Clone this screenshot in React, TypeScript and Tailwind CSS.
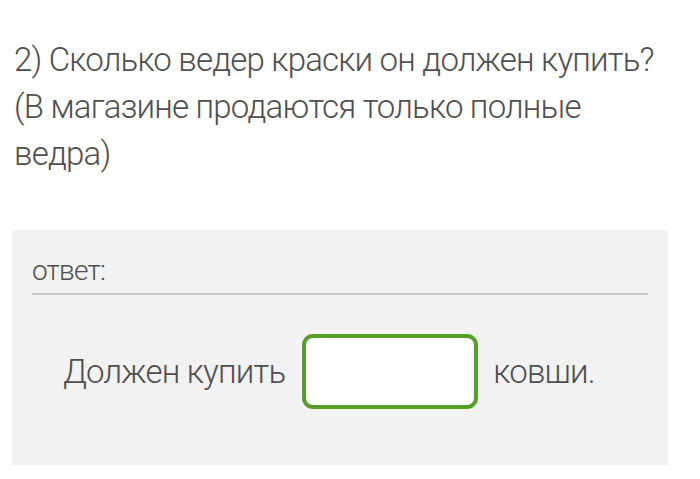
import React from "react";

export default function App() {
  return (
    <div className="w-[700px] h-[479px] bg-white text-[#4f4f4f] font-['Roboto',sans-serif] font-light tracking-[-0.8px] overflow-hidden">
      <div className="pt-[36px] pl-[14px] text-[33px] leading-[47px]">
        2) Сколько ведер краски он должен купить?
        <br />
        (В магазине продаются только полные
        <br />
        ведра)
      </div>

      <div className="mt-[53px] mx-[12px] w-[656px] h-[235px] bg-[#f2f2f2] px-[20px] pt-[23px]">
        <div className="text-[28px] leading-[35px] pb-[5px] border-b-2 border-[#c4c4c4]">
          ответ:
        </div>
        <div className="flex items-center pl-[31px] mt-[39px] text-[33px]">
          <span>Должен купить</span>
          <input
            type="text"
            className="ml-[17px] mr-[15px] w-[176px] h-[75px] bg-white border-4 border-[#56a02a] rounded-[11px] outline-none"
          />
          <span>ковши.</span>
        </div>
      </div>
    </div>
  );
}
